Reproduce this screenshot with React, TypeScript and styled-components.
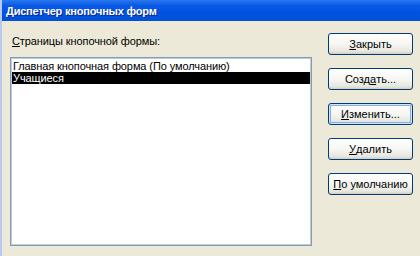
import React from "react";
import styled, { createGlobalStyle } from "styled-components";

const Global = createGlobalStyle`
  html, body { margin: 0; padding: 0; background: #ece9d8; }
  body { font-family: "Liberation Sans", Arial, sans-serif; }
`;

const Window = styled.div`
  width: 420px;
  height: 256px;
  display: flex;
  flex-direction: column;
  background: #ece9d8;
  border-left: 2px solid #b9c9ef;
  box-sizing: border-box;
  overflow: hidden;
`;

const TitleBar = styled.div`
  height: 21px;
  flex: none;
  display: flex;
  align-items: center;
  padding-left: 6px;
  margin-left: -2px;
  background: linear-gradient(to bottom, #2b78f0 0%, #0a5ae6 25%, #0053e0 60%, #0350d8 100%);
  color: #fff;
  font-family: "Liberation Sans", Arial, sans-serif;
  font-weight: bold;
  font-size: 11px;
  letter-spacing: -0.2px;
  text-shadow: 1px 1px 0 #0a2a8a;
`;

const Body = styled.div`
  flex: 1;
  display: flex;
  padding: 12px 7px 10px 8px;
  gap: 16px;
`;

const LeftCol = styled.div`
  display: flex;
  flex-direction: column;
  width: 302px;
`;

const Label = styled.div`
  font-size: 11px;
  color: #000;
  height: 13px;
  line-height: 13px;
  padding-left: 2px;
  margin-top: 2px;
  margin-bottom: 9px;
  letter-spacing: -0.1px;
`;

const ListBox = styled.div`
  flex: 1;
  background: #fff;
  border: 1px solid #7f9db9;
  box-shadow: inset 0 0 0 1px #c3cbd6;
  padding: 2px 1px;
  display: flex;
  flex-direction: column;
`;

const Item = styled.div<{ $selected?: boolean }>`
  height: 12px;
  line-height: 12px;
  padding-left: 1px;
  font-size: 11px;
  letter-spacing: -0.1px;
  white-space: nowrap;
  color: ${(p) => (p.$selected ? "#fff" : "#000")};
  background: ${(p) => (p.$selected ? "#000" : "transparent")};
`;

const RightCol = styled.div`
  display: flex;
  flex-direction: column;
  gap: 13px;
`;

const Button = styled.div<{ $focused?: boolean }>`
  width: 85px;
  height: 22px;
  box-sizing: border-box;
  border: 1px solid #003c74;
  border-radius: 3px;
  background: linear-gradient(to bottom, #ffffff 0%, #f6f6f3 50%, #e8e8e2 85%, #d6d0c5 100%);
  box-shadow: ${(p) =>
    p.$focused
      ? "inset 0 0 0 1px #cee7ff, inset 0 0 0 2px #89ade4"
      : "inset 0 -1px 0 #d6d0c5"};
  display: flex;
  align-items: center;
  justify-content: center;
  font-size: 11px;
  color: #000;
`;

const U = styled.span`
  text-decoration: underline;
`;

export default function App() {
  return (
    <>
      <Global />
      <Window>
        <TitleBar>Диспетчер кнопочных форм</TitleBar>
        <Body>
          <LeftCol>
            <Label>
              <U>С</U>траницы кнопочной формы:
            </Label>
            <ListBox>
              <Item>Главная кнопочная форма (По умолчанию)</Item>
              <Item $selected>Учащиеся</Item>
            </ListBox>
          </LeftCol>
          <RightCol>
            <Button>
              <U>З</U>акрыть
            </Button>
            <Button>
              Созд<U>а</U>ть...
            </Button>
            <Button $focused>
              <U>И</U>зменить...
            </Button>
            <Button>
              <U>У</U>далить
            </Button>
            <Button>
              <U>П</U>о умолчанию
            </Button>
          </RightCol>
        </Body>
      </Window>
    </>
  );
}
